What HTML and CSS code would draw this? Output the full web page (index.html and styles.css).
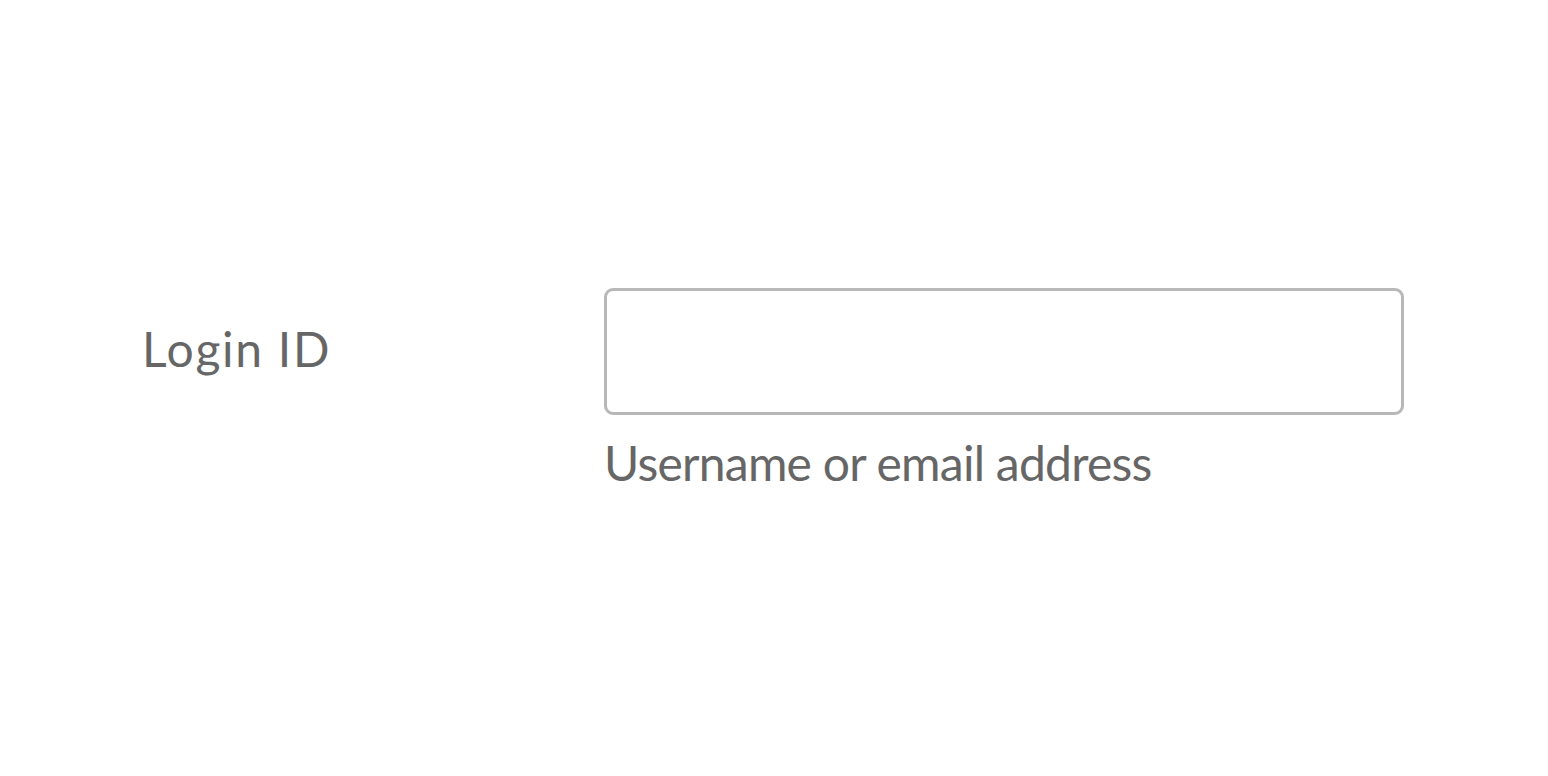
FILE: index.html
```html
<!DOCTYPE html>
<html lang="en">

<head>
    <meta charset="UTF-8">
    <meta name="viewport" content="width=device-width, initial-scale=1.0">
    <title>Login</title>

    <link rel="stylesheet" href="styles.css">
</head>

<body>
    <form class="login-form">
        <div class="form-row">
            <label for="login-id" class="form-label">Login ID</label>
            <div class="form-field">
                <input type="text" id="login-id" class="form-input">
                <p class="form-help">Username or email address</p>
            </div>
        </div>
    </form>
</body>

</html>
```

FILE: styles.css
```css
* {
    box-sizing: border-box;
}

body {
    margin: 0;
    background-color: #fff;
    font-family: Lato, "Open Sans", sans-serif;
    color: #666;
}

.login-form {
    padding: 288px 0 0 142px;
}

.form-row {
    display: grid;
    grid-template-columns: 462px 800px;
    align-items: start;
}

.form-label {
    display: flex;
    align-items: center;
    height: 121px;
    font-size: 48px;
    letter-spacing: 1.7px;
}

.form-input {
    display: block;
    width: 800px;
    height: 127px;
    border: 3px solid #b8b8b8;
    border-radius: 9px;
    background-color: #fff;
    outline: none;
}

.form-help {
    margin: 19px 0 0 0;
    font-size: 48px;
    line-height: 1.2;
    letter-spacing: -0.75px;
}
```
